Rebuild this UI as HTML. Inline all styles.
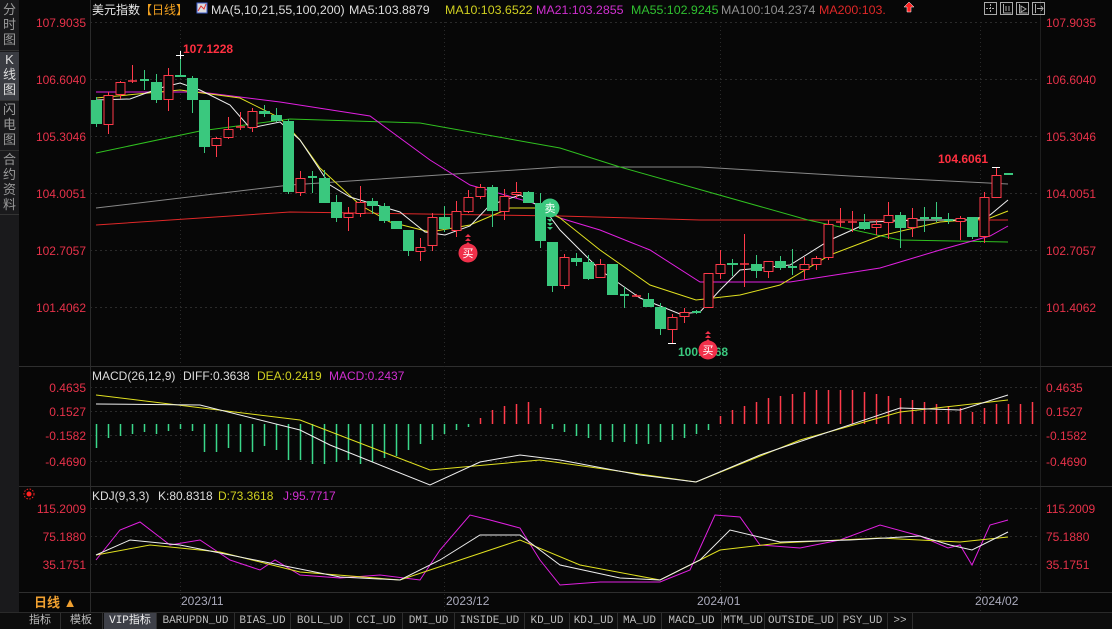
<!DOCTYPE html>
<html><head><meta charset="utf-8"><style>
body{margin:0;background:#070707;width:1112px;height:628px;overflow:hidden;font-family:"Liberation Sans","Noto Sans CJK SC",sans-serif}
#side{position:absolute;left:0;top:0;width:19px;height:612px;background:#1a1a1c}
.st{position:absolute;left:0;width:19px;color:#9a9a9a;font-size:13px;line-height:15px;text-align:center;border-bottom:1px solid #333}
.tabs{position:absolute;left:0;top:612px;width:1112px;height:16px;background:#0d0d0d;border-top:1px solid #2a2a2a}
.tab{position:absolute;top:0;height:16px;line-height:16px;font-size:11px;color:#bbb;text-align:center;border-right:1px solid #2e2e2e;font-family:"Liberation Mono","Noto Sans CJK SC",monospace}
</style></head><body>
<div id="side">
<div class="st" style="top:2px;height:48px">分<br>时<br>图</div>
<div class="st" style="top:52px;height:48px;background:#3a3c42;color:#ddd">K<br>线<br>图</div>
<div class="st" style="top:102px;height:48px">闪<br>电<br>图</div>
<div class="st" style="top:152px;height:62px">合<br>约<br>资<br>料</div>
</div>
<svg id="s" width="1112" height="628" style="position:absolute;left:0;top:0" xmlns="http://www.w3.org/2000/svg"></svg>
<div class="tabs">
<div class="tab" style="left:20px;width:40px">指标</div>
<div class="tab" style="left:60px;width:42px">模板</div>
<div class="tab" style="left:104px;width:52px;background:#3e4048;color:#eee">VIP指标</div>
<div class="tab" style="left:157px;width:77px">BARUPDN_UD</div>
<div class="tab" style="left:235px;width:55px">BIAS_UD</div>
<div class="tab" style="left:291px;width:58px">BOLL_UD</div>
<div class="tab" style="left:350px;width:52px">CCI_UD</div>
<div class="tab" style="left:403px;width:51px">DMI_UD</div>
<div class="tab" style="left:455px;width:69px">INSIDE_UD</div>
<div class="tab" style="left:525px;width:44px">KD_UD</div>
<div class="tab" style="left:570px;width:47px">KDJ_UD</div>
<div class="tab" style="left:618px;width:43px">MA_UD</div>
<div class="tab" style="left:662px;width:59px">MACD_UD</div>
<div class="tab" style="left:722px;width:42px">MTM_UD</div>
<div class="tab" style="left:765px;width:72px">OUTSIDE_UD</div>
<div class="tab" style="left:838px;width:49px">PSY_UD</div>
<div class="tab" style="left:888px;width:24px">&gt;&gt;</div>
</div>
<script>
var s=document.getElementById('s'),h='';
function L(x1,y1,x2,y2,c,w,d){h+='<line x1="'+x1+'" y1="'+y1+'" x2="'+x2+'" y2="'+y2+'" stroke="'+c+'" stroke-width="'+(w||1)+'"'+(d?' stroke-dasharray="'+d+'"':'')+'/>';}
function T(x,y,t,c,sz,a,b){h+='<text x="'+x+'" y="'+y+'" fill="'+c+'" font-size="'+(sz||12)+'"'+(a?' text-anchor="'+a+'"':'')+(b?' font-weight="bold"':'')+'>'+t+'</text>';}
function P(pts,c){h+='<polyline fill="none" stroke="'+c+'" stroke-width="1" points="'+pts.map(function(p){return p.join(',')}).join(' ')+'"/>';}
L(90.5,0,90.5,612,'#2a2a2a');L(1040.5,0,1040.5,592,'#1e1e1e');
L(19,366.5,1112,366.5,'#2e2e2e');L(19,486.5,1112,486.5,'#2e2e2e');L(19,592.5,1112,592.5,'#2e2e2e');
[22,79,136,193,250,307].forEach(function(y){L(90,y+.5,1040,y+.5,'#2a2a2a',1,'2,3')});
[387,411,435,461].forEach(function(y){L(90,y+.5,1040,y+.5,'#2a2a2a',1,'2,3')});
[508,536,564].forEach(function(y){L(90,y+.5,1040,y+.5,'#2a2a2a',1,'2,3')});
[180,444,720,980].forEach(function(x){L(x+.5,22,x+.5,612,'#2a2a2a',1,'1,3')});
var pl=['107.9035','106.6040','105.3046','104.0051','102.7057','101.4062'];
[22,79,136,193,250,307].forEach(function(y,i){T(86,y+5,pl[i],'#e8324a',12,'end');T(1046,y+5,pl[i],'#e8324a',12)});
var ml=['0.4635','0.1527','-0.1582','-0.4690'];
[387,411,435,461].forEach(function(y,i){T(86,y+5,ml[i],'#e8324a',12,'end');T(1046,y+5,ml[i],'#e8324a',12)});
var kl=['115.2009','75.1880','35.1751'];
[508,536,564].forEach(function(y,i){T(86,y+5,kl[i],'#e8324a',12,'end');T(1046,y+5,kl[i],'#e8324a',12)});
T(92,14,'美元指数','#e8e8e8',12);T(140,14,'【日线】','#f0a020',12);
h+='<rect x="197" y="3" width="10" height="10" fill="#ddd" stroke="#4060d0"/><polyline points="198,11 201,6 204,9 206,4" stroke="#e03030" fill="none"/>';
T(211,14,'MA(5,10,21,55,100,200)','#ddd',12.4);T(349,14,'MA5:103.8879','#ddd',12.4);T(445,14,'MA10:103.6522','#d0d020',12.4);
T(536,14,'MA21:103.2855','#d030d0',12.4);T(631,14,'MA55:102.9245','#30c030',12.4);T(721,14,'MA100:104.2374','#909090',12.4);T(819,14,'MA200:103.','#e02828',12.4);
h+='<path d="M909,2 L904,7 L907,7 L907,12 L911,12 L911,7 L914,7 Z" fill="#ff2020" stroke="#fff" stroke-width="0.5"/>';
[984,1000,1016,1032].forEach(function(x){h+='<rect x="'+(x+.5)+'" y="2.5" width="12" height="12" fill="none" stroke="#aaa"/>'});
h+='<path d="M990.5,4v9M986,8.5h9" stroke="#aaa" stroke-dasharray="2,1"/><path d="M1003.5,4v9h8M1006,6v5M1009,6v5" stroke="#aaa" fill="none"/><path d="M1019.5,4v9h8M1021,6l5,3l-5,3z" stroke="#aaa" fill="none"/><path d="M1035.5,4v9M1037,8.5h6M1041,6l2,2.5l-2,2.5" stroke="#aaa" fill="none"/>';
T(92,380,'MACD(26,12,9)','#ddd',12);T(183,380,'DIFF:0.3638','#ddd',12);T(257,380,'DEA:0.2419','#d0d020',12);T(329,380,'MACD:0.2437','#d030d0',12);
T(92,500,'KDJ(9,3,3)','#ddd',12);T(158,500,'K:80.8318','#ddd',12);T(218,500,'D:73.3618','#d0d020',12);T(283,500,'J:95.7717','#d030d0',12);
h+='<circle cx="29" cy="494" r="2.5" fill="#f22"/><circle cx="29" cy="494" r="5" fill="none" stroke="#f22" stroke-dasharray="1.5,1.5"/>';
T(181,605,'2023/11','#aab',12);T(446,605,'2023/12','#aab',12);T(697,605,'2024/01','#aab',12);T(975,605,'2024/02','#aab',12);
T(34,607,'日线 ▲','#f0a030',13,null,1);
P([[96,208],[290,185],[560,167],[700,167],[850,176],[1008,184]],'#888');
P([[96,225],[290,212],[560,216],[700,220],[1008,220]],'#e02828');
P([[96,153],[200,131],[290,119],[420,123],[560,148],[620,167],[808,220],[900,240],[1008,242]],'#30c020');
P([[96,92],[200,92],[280,102],[370,116],[430,160],[470,185],[540,205],[560,218],[600,230],[650,250],[700,282],[790,282],[880,268],[940,250],[990,236],[1008,226]],'#e020e0');
P([[96,98],[180,90],[240,98],[280,118],[300,140],[320,168],[360,205],[390,222],[430,232],[470,225],[510,208],[540,208],[560,218],[600,250],[650,285],[696,300],[740,295],[780,285],[830,255],[880,236],[940,222],[990,218],[1008,211]],'#e0e020');
P([[96,100],[130,99],[160,88],[180,83],[200,90],[230,105],[250,128],[280,122],[300,140],[330,185],[350,197],[400,212],[425,232],[445,235],[470,226],[490,205],[520,195],[545,210],[560,230],[600,270],[640,298],[680,314],[700,312],[720,290],[740,270],[790,265],[830,240],[870,222],[920,220],[970,220],[990,215],[1008,200]],'#eee');
var C=[[100,124,97,127],[124,95,92,134],[94,82,81,99],[81,81,65,83],[80,80,70,90],[82,100,74,103],[99,75,68,111],[75,77,55,77],[78,100,76,113],[100,147,100,153],[145,138,137,157],[137,129,117,139],[127,127,112,130],[127,111,108,132],[111,114,105,117],[115,121,108,122],[121,192,119,194],[192,178,171,196],[177,177,171,193],[178,203,170,203],[202,218,195,222],[217,213,207,231],[213,202,186,217],[201,206,198,214],[206,221,203,223],[221,229,221,229],[230,251,230,256],[251,247,238,261],[245,217,213,251],[217,229,206,232],[230,211,201,237],[211,197,190,213],[196,187,184,199],[187,211,185,227],[211,196,189,220],[194,192,182,198],[192,203,191,203],[203,241,193,248],[242,286,242,292],[285,257,254,289],[258,262,253,266],[262,279,255,280],[277,264,259,278],[264,295,264,295],[295,295,287,308],[296,296,294,297],[299,307,293,307],[307,329,303,335],[329,317,314,344],[316,312,308,323],[312,312,310,314],[307,273,273,307],[273,264,250,279],[263,265,259,276],[264,264,234,287],[264,271,255,278],[271,261,261,278],[261,268,256,270],[267,267,249,275],[269,264,257,279],[264,258,256,270],[257,224,220,260],[222,222,208,227],[222,222,211,232],[222,229,214,230],[227,224,220,235],[222,215,202,239],[215,228,212,248],[227,218,208,237],[218,218,207,232],[217,219,202,222],[220,220,213,224],[221,218,216,240],[217,237,217,239],[236,197,192,243],[197,175,167,197],[174,174,173,175]];
C.forEach(function(c,i){var x=96.5+12*i,up=c[1]<c[0]||(c[1]==c[0]&&[3,12,21,45,54,62,63].indexOf(i)>=0);
var col=up?'#ff3a4a':'#3ac87e',t=Math.min(c[0],c[1]),b=Math.max(c[0],c[1]);
if(up){L(x,c[2],x,t,col);L(x,b,x,c[3],col);if(b-t<2)L(x-4.5,t,x+4.5,t,col,1.5);else h+='<rect x="'+(x-4.5)+'" y="'+(t+.5)+'" width="9" height="'+(b-t)+'" fill="#070707" stroke="'+col+'"/>';}
else{L(x,c[2],x,c[3],col);if(b-t<2)L(x-4.5,t,x+4.5,t,col,2);else h+='<rect x="'+(x-5.5)+'" y="'+t+'" width="11" height="'+(b-t)+'" fill="'+col+'"/>';}
});
T(183,53,'107.1228','#ff3040',12,null,1);L(176,55.5,184,55.5,'#fff');L(180.5,51,180.5,59,'#fff');
T(938,163,'104.6061','#ff3040',12,null,1);L(992,167.5,1000,167.5,'#fff');
T(678,356,'100.5468','#3ac87e',12,null,1);L(668,343.5,676,343.5,'#fff');
function buy(x,y,sell){var c=sell?'#3ac87e':'#f0304a';for(var k=0;k<3;k++){var yy=sell?y+11+k*4:y-11-k*4;h+='<path d="M'+(x-3)+','+(sell?yy:yy+3)+' L'+(x+3)+','+(sell?yy:yy+3)+' L'+x+','+(sell?yy+3:yy)+' Z" fill="'+c+'"/>';}
h+='<circle cx="'+x+'" cy="'+y+'" r="9.5" fill="'+c+'"/>';T(x,y+4,sell?'卖':'买','#fff',11,'middle');}
buy(468,253);buy(708,350);buy(550,208,1);
var z=424,H=[24,14,12,10,8,10,7,5,7,28,28,24,28,28,22,26,36,36,40,40,38,36,40,38,34,32,26,20,16,10,6,3,-6,-14,-18,-20,-22,-16,5,8,12,14,16,18,18,20,20,18,16,14,10,6,-8,-14,-18,-22,-26,-28,-30,-32,-34,-34,-34,-34,-32,-30,-28,-26,-24,-22,-20,-18,-16,-12,-16,-20,-20,-20,-22];
H.forEach(function(v,i){var x=96.5+12*i;L(x,z,x,z+v,v>0?'#3ad88a':'#ff3a4a',1.5)});
P([[96,395],[300,420],[430,470],[540,460],[696,482],[800,440],[900,412],[1008,400]],'#e0e020');
P([[96,404],[200,405],[300,430],[330,445],[430,485],[480,462],[520,455],[560,460],[640,475],[696,482],[760,455],[900,408],[960,410],[1008,395]],'#eee');
P([[96,560],[120,530],[140,522],[170,545],[200,540],[230,560],[260,570],[275,560],[300,575],[340,578],[380,575],[420,580],[440,550],[470,515],[490,520],[520,528],[540,560],[560,585],[600,582],[660,582],[690,570],[715,515],[740,517],[760,545],[800,548],[840,540],[880,525],[920,536],[948,548],[960,545],[972,565],[990,525],[1008,520]],'#e020e0');
P([[96,555],[150,545],[220,552],[300,572],[400,580],[460,560],[520,540],[580,565],[660,580],[720,550],[780,543],[880,538],[960,542],[1008,537]],'#e0e020');
P([[96,555],[130,540],[180,545],[230,555],[280,565],[340,577],[400,580],[440,560],[480,535],[520,535],[560,565],[620,578],[660,580],[700,560],[730,530],[780,542],[850,540],[920,536],[950,545],[972,550],[1008,532]],'#eee');
s.innerHTML=h;
</script>
</body></html>
